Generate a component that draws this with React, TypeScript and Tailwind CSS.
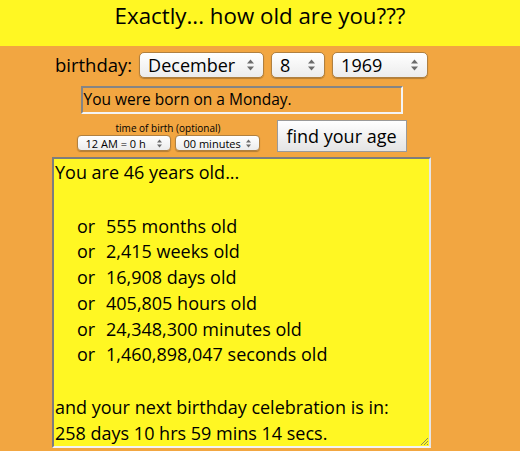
function Arrows({ small = false }: { small?: boolean }) {
  return small ? (
    <svg width="5" height="9" viewBox="0 0 5 9" className="shrink-0">
      <path d="M2.5 0.5 L5 3.5 H0Z" fill="#6b6b6b" />
      <path d="M2.5 8.5 L5 5.5 H0Z" fill="#6b6b6b" />
    </svg>
  ) : (
    <svg width="7" height="12" viewBox="0 0 7 12" className="shrink-0">
      <path d="M3.5 0.5 L7 4.5 H0Z" fill="#6b6b6b" />
      <path d="M3.5 11.5 L7 7.5 H0Z" fill="#6b6b6b" />
    </svg>
  );
}

function Select({
  value,
  className,
  small = false,
}: {
  value: string;
  className: string;
  small?: boolean;
}) {
  return (
    <div
      className={`flex items-center justify-between border border-[#b08040] bg-gradient-to-b from-white to-[#ececec] shadow-[0_1px_1px_rgba(0,0,0,0.25)] ${small ? "h-4 rounded-[4px] pl-2 pr-2 text-[11px]" : "h-[26px] rounded-[5px] pl-2 pr-[9px] text-[18px]"} ${className}`}
    >
      <span className="leading-none">{value}</span>
      <Arrows small={small} />
    </div>
  );
}

const lines = [
  "555 months old",
  "2,415 weeks old",
  "16,908 days old",
  "405,805 hours old",
  "24,348,300 minutes old",
  "1,460,898,047 seconds old",
];

export default function App() {
  return (
    <div className="min-h-[451px] w-[520px] bg-[#f2a641] font-['Comic_Sans_MS','Open_Sans',sans-serif] text-black">
      {/* Header */}
      <div className="flex h-[46px] items-start justify-center bg-[#fff723] pt-0 text-[22.3px] leading-[32px]">
        Exactly... how old are you???
      </div>

      <div className="flex w-[483px] flex-col items-center">
        {/* Birthday row */}
        <div className="mt-[6px] flex h-[26px] items-center gap-[7px]">
          <span className="text-[18.5px] leading-none">birthday:</span>
          <Select value="December" className="w-[125px]" />
          <Select value="8" className="w-[54px]" />
          <Select value="1969" className="w-[96px]" />
        </div>

        {/* Day of week */}
        <div className="mt-[8px] flex h-[28px] w-[322px] items-center border-2 border-t-[#858585] border-l-[#858585] border-r-[#f4f4f4] border-b-[#f4f4f4] pl-[1px] text-[15.5px]">
          You were born on a Monday.
        </div>

        {/* Time + button */}
        <div className="mt-[6px] flex items-start gap-[17px]">
          <div className="flex flex-col items-center">
            <span className="mt-[2px] text-[10px] leading-[12px]">time of birth (optional)</span>
            <div className="mt-[1px] flex gap-[4px]">
              <Select small value="12 AM = 0 h" className="w-[94px]" />
              <Select small value="00 minutes" className="w-[85px]" />
            </div>
          </div>
          <button className="flex h-[32px] w-[130px] items-center justify-center border border-[#9a9a9a] bg-gradient-to-b from-white to-[#e4e4e4] text-[18px]">
            find your age
          </button>
        </div>

        {/* Result area */}
        <div className="relative mt-[5px] h-[291px] w-[379px] border-2 border-t-[#7d7d7d] border-l-[#7d7d7d] border-r-[#e6e6e6] border-b-[#f4f4f4] bg-[#fff723] pl-[1px] text-[18px] leading-[25.7px]">
          <div className="mt-[1px]">You are 46 years old...</div>
          <div className="h-[28px]" />
          {lines.map((l) => (
            <div key={l} className="flex pl-[22px]">
              <span className="w-[29px]">or</span>
              <span>{l}</span>
            </div>
          ))}
          <div className="h-[27px]" />
          <div>and your next birthday celebration is in:</div>
          <div>258 days 10 hrs 59 mins 14 secs.</div>
          <svg width="10" height="10" viewBox="0 0 10 10" className="absolute bottom-0 right-0">
            <path d="M9 2 L2 9 M9 5 L5 9 M9 8 L8 9" stroke="#8a8a5a" strokeWidth="1" />
          </svg>
        </div>
      </div>
    </div>
  );
}
